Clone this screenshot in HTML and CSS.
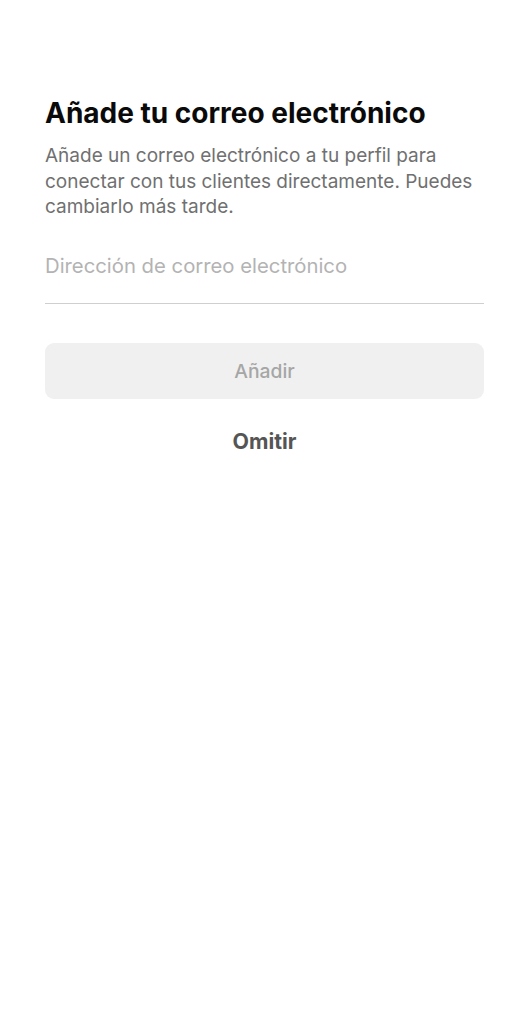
FILE: index.html
```html
<!DOCTYPE html>
<html lang="es">
<head>
<meta charset="utf-8">
<link rel="stylesheet" href="styles.css">
</head>
<body>
<main class="page">
  <h1 class="title">Añade tu correo electrónico</h1>
  <p class="desc">Añade un correo electrónico a tu perfil para conectar con tus clientes directamente. Puedes cambiarlo más tarde.</p>
  <div class="field">
    <input class="input" type="email" placeholder="Dirección de correo electrónico">
  </div>
  <button class="btn-add" type="button">Añadir</button>
  <button class="btn-skip" type="button">Omitir</button>
</main>
</body>
</html>
```
FILE: styles.css
```css
html, body {
  margin: 0;
  padding: 0;
  background: #ffffff;
}
body {
  font-family: Inter, Roboto, "Liberation Sans", sans-serif;
}
.page {
  padding: 96px 44px 0 45px;
  display: flex;
  flex-direction: column;
}
.title {
  margin: 0;
  font-size: 28px;
  font-weight: 700;
  color: #0a0a0a;
  line-height: 34px;
}
.desc {
  margin: 13px 0 0;
  font-size: 19px;
  line-height: 25.5px;
  color: #707070;
}
.field {
  margin-top: 34px;
  border-bottom: 1px solid #cfcfcf;
  padding-bottom: 25px;
}
.input {
  display: block;
  border: none;
  outline: none;
  padding: 0;
  width: 100%;
  font-family: inherit;
  font-size: 20.3px;
  line-height: 24px;
  height: 24px;
  color: #222;
  background: transparent;
}
.input::placeholder {
  color: #b3b3b3;
}
.btn-add {
  margin-top: 39px;
  height: 56px;
  border: none;
  border-radius: 9px;
  background: #f0f0f0;
  color: #a6a6a6;
  font-family: inherit;
  font-size: 19.3px;
  font-weight: 500;
}
.btn-skip {
  margin-top: 30px;
  align-self: center;
  border: none;
  background: transparent;
  padding: 0;
  font-family: inherit;
  font-size: 21.3px;
  font-weight: 700;
  color: #555555;
  line-height: 24px;
}
```
